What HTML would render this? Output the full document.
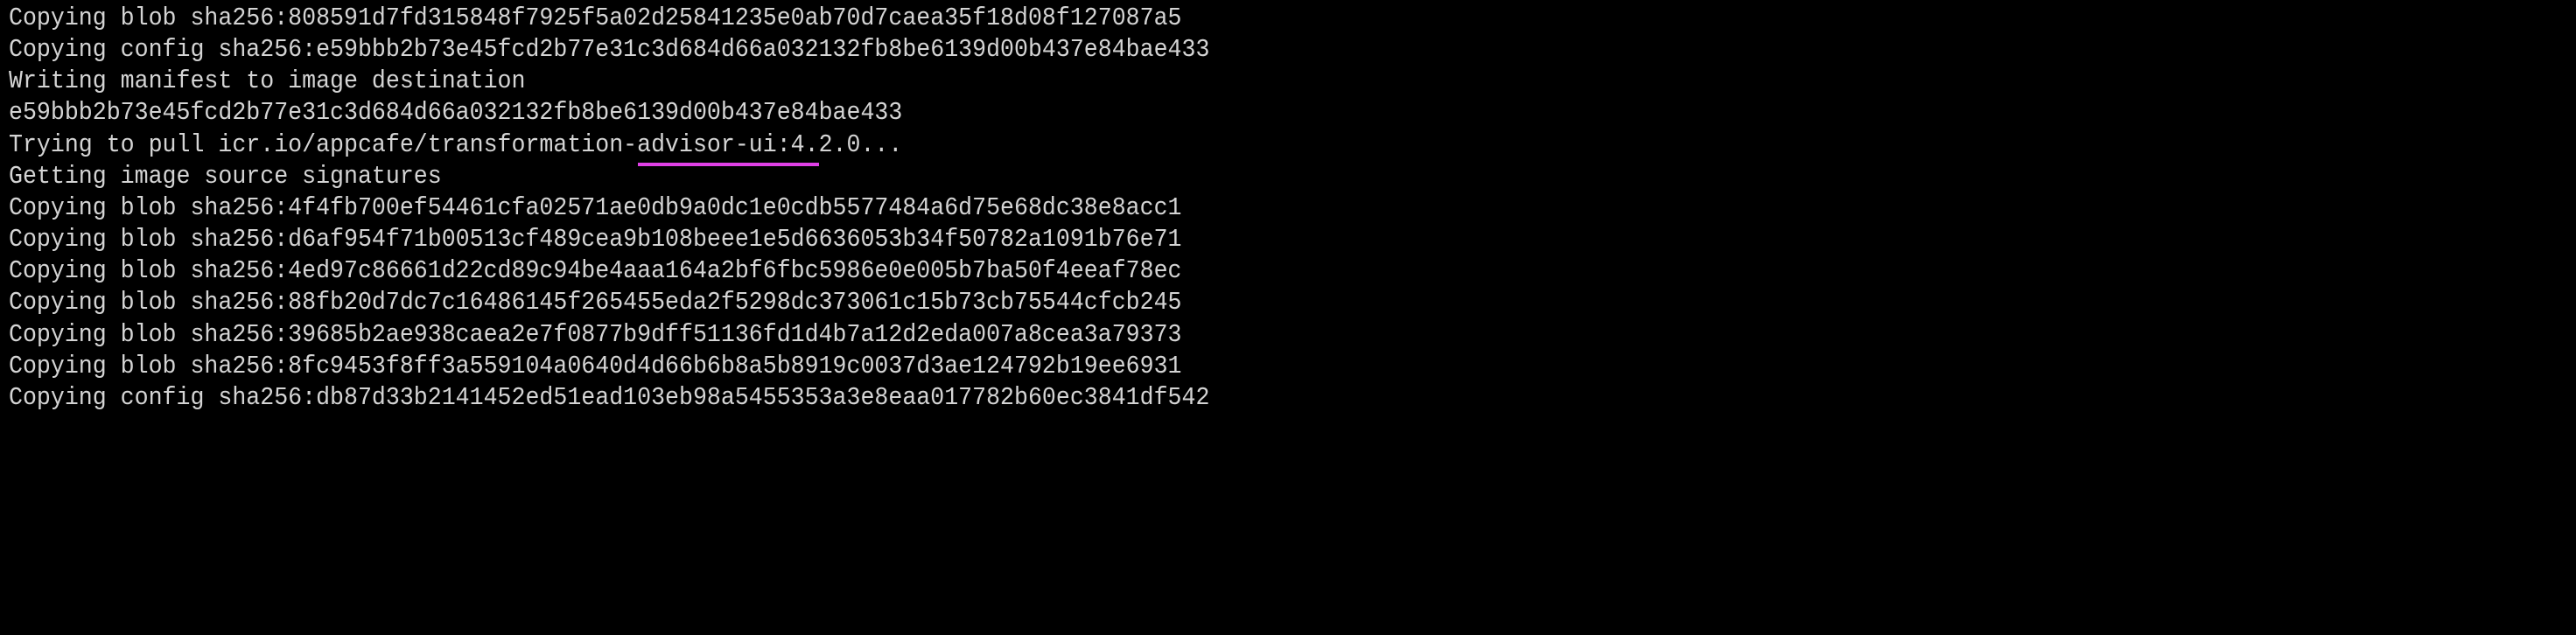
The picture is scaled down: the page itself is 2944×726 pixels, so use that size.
<!DOCTYPE html>
<html><head><meta charset="utf-8"><style>
html,body{margin:0;padding:0;background:#000;width:2944px;height:726px;overflow:hidden}
pre{margin:0;position:absolute;left:10px;top:3px;font-family:"Liberation Mono",monospace;font-size:29px;line-height:36.15px;color:#d4d4d4;white-space:pre;transform:scaleX(0.917);transform-origin:0 0}
.u{position:absolute;left:729px;top:186px;width:207px;height:4px;background:#e040e6}
</style></head><body>
<pre>Copying blob sha256:808591d7fd315848f7925f5a02d25841235e0ab70d7caea35f18d08f127087a5
Copying config sha256:e59bbb2b73e45fcd2b77e31c3d684d66a032132fb8be6139d00b437e84bae433
Writing manifest to image destination
e59bbb2b73e45fcd2b77e31c3d684d66a032132fb8be6139d00b437e84bae433
Trying to pull icr.io/appcafe/transformation-advisor-ui:4.2.0...
Getting image source signatures
Copying blob sha256:4f4fb700ef54461cfa02571ae0db9a0dc1e0cdb5577484a6d75e68dc38e8acc1
Copying blob sha256:d6af954f71b00513cf489cea9b108beee1e5d6636053b34f50782a1091b76e71
Copying blob sha256:4ed97c86661d22cd89c94be4aaa164a2bf6fbc5986e0e005b7ba50f4eeaf78ec
Copying blob sha256:88fb20d7dc7c16486145f265455eda2f5298dc373061c15b73cb75544cfcb245
Copying blob sha256:39685b2ae938caea2e7f0877b9dff51136fd1d4b7a12d2eda007a8cea3a79373
Copying blob sha256:8fc9453f8ff3a559104a0640d4d66b6b8a5b8919c0037d3ae124792b19ee6931
Copying config sha256:db87d33b2141452ed51ead103eb98a5455353a3e8eaa017782b60ec3841df542</pre>
<div class="u"></div>
</body></html>
